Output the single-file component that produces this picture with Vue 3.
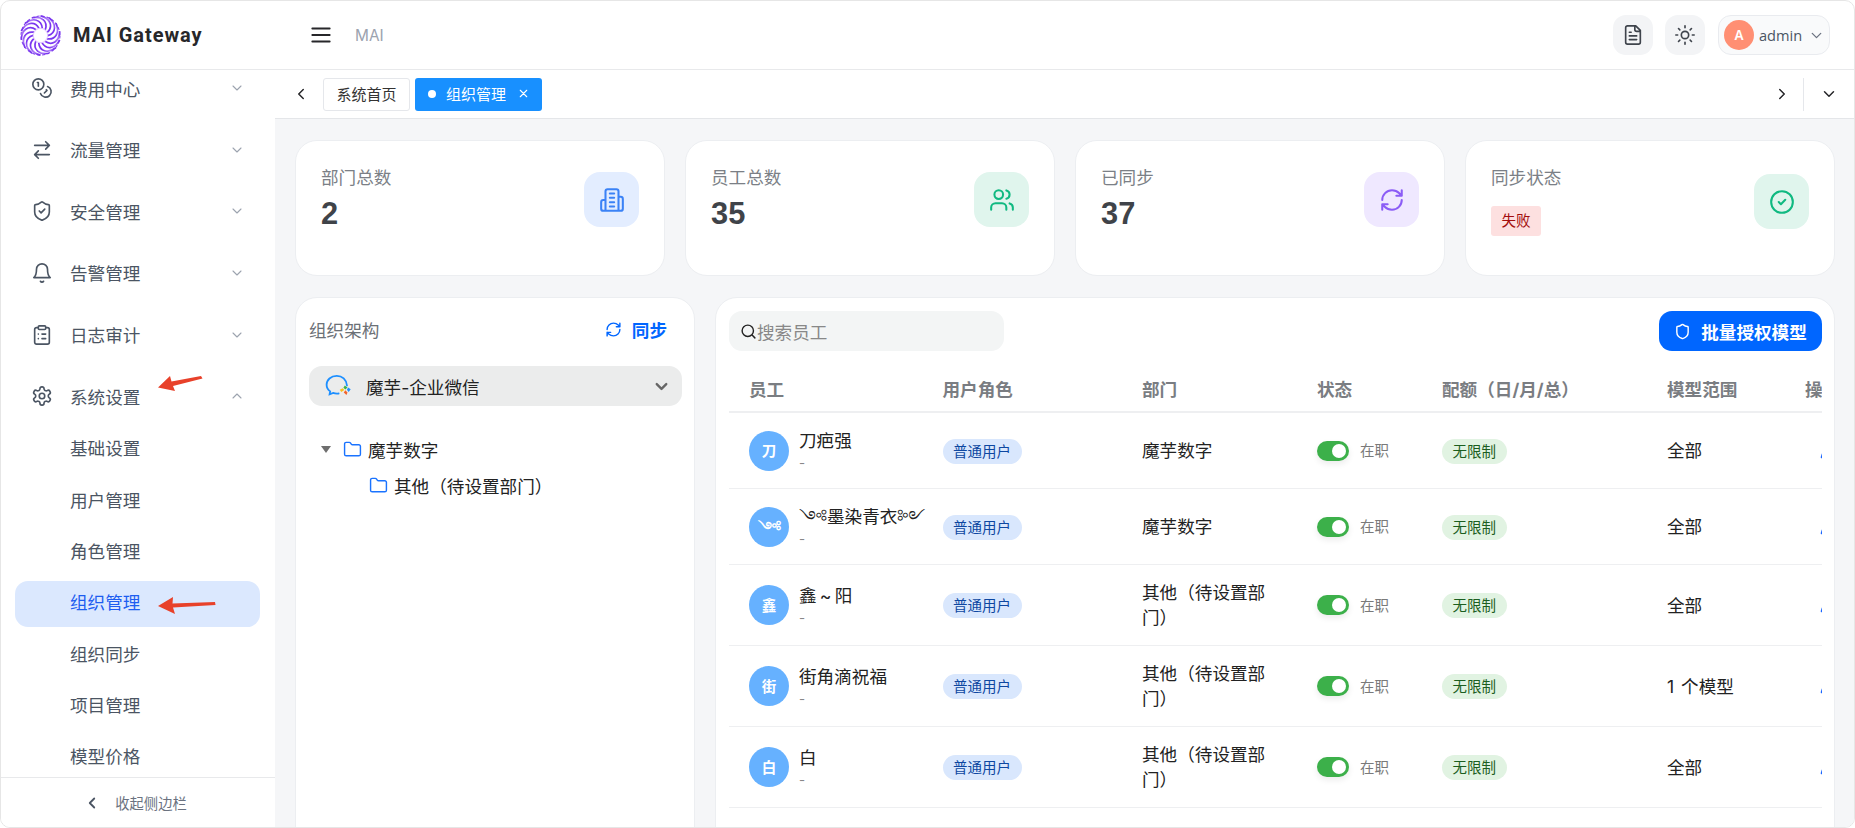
<template>
  <div class="app">
    <header class="topbar">
      <div class="brand">
        <svg class="logo" viewBox="0 0 40 40">
          <defs>
            <radialGradient id="swirl" cx="50%" cy="50%" r="50%">
              <stop offset="30%" stop-color="#e3c4ff" />
              <stop offset="100%" stop-color="#7a35f0" />
            </radialGradient>
          </defs>
          <circle cx="20" cy="20" r="19.5" fill="#fff" />
          <path
            v-for="a in swirlAngles"
            :key="a"
            d="M20 0.8C29 3 33 11 26.500 17"
            fill="none"
            stroke="url(#swirl)"
            stroke-width="1.700"
            :transform="`rotate(${a} 20 20)`"
          />
          <circle cx="20" cy="20" r="19" fill="none" stroke="#7c3aed" stroke-width="1" stroke-dasharray="3 2" />
          <circle cx="20" cy="20" r="6.500" fill="#fff" />
          <circle cx="20" cy="20" r="7" fill="none" stroke="#e0c6ff" stroke-width="1" />
        </svg>
        <span class="brand-name">MAI Gateway</span>
      </div>
      <button class="menu-btn">
        <svg class="ic" viewBox="0 0 24 24"><path :d="icons.menu" /></svg>
      </button>
      <span class="crumb">MAI</span>
      <div class="top-actions">
        <button class="round-btn"><svg class="ic" viewBox="0 0 24 24"><path :d="icons.file" /></svg></button>
        <button class="round-btn"><svg class="ic" viewBox="0 0 24 24"><path :d="icons.sun" /></svg></button>
        <div class="user-pill">
          <span class="user-avatar">A</span>
          <span class="user-name">admin</span>
          <svg class="ic pill-chev" viewBox="0 0 24 24"><path :d="icons.down" /></svg>
        </div>
      </div>
    </header>

    <div class="body">
      <aside class="sidebar">
        <nav class="nav">
          <div class="nav-list">
            <div v-for="item in navItems" :key="item.label" class="nav-item">
              <svg class="ic nav-icon" viewBox="0 0 24 24"><path :d="icons[item.icon]" /></svg>
              <span class="nav-label">{{ item.label }}</span>
              <svg class="ic nav-chev" viewBox="0 0 24 24"><path :d="item.open ? icons.up : icons.down" /></svg>
            </div>
            <div class="sub-list">
              <div
                v-for="sub in subItems"
                :key="sub"
                class="sub-item"
                :class="{ active: sub === '组织管理' }"
              >{{ sub }}</div>
            </div>
          </div>
        </nav>
        <div class="side-foot">
          <svg class="ic foot-chev" viewBox="0 0 24 24"><path :d="icons.left" /></svg>
          <span>收起侧边栏</span>
        </div>
      </aside>

      <div class="content">
        <div class="tabbar">
          <svg class="ic tab-nav" viewBox="0 0 24 24"><path :d="icons.left" /></svg>
          <div class="tab">系统首页</div>
          <div class="tab current">
            <i class="tab-dot"></i>
            <span>组织管理</span>
            <svg class="ic tab-close" viewBox="0 0 24 24"><path :d="icons.close" /></svg>
          </div>
          <div class="tab-end">
            <svg class="ic tab-nav" viewBox="0 0 24 24"><path :d="icons.right" /></svg>
            <span class="tab-sep"></span>
            <svg class="ic tab-nav" viewBox="0 0 24 24"><path :d="icons.down" /></svg>
          </div>
        </div>

        <main class="main">
          <section class="stats">
            <div v-for="s in stats" :key="s.label" class="stat-card">
              <div class="stat-text">
                <div class="stat-label">{{ s.label }}</div>
                <div v-if="s.value" class="stat-value">{{ s.value }}</div>
                <div v-else class="stat-badge">{{ s.badge }}</div>
              </div>
              <div class="stat-icon" :class="s.tone">
                <svg class="ic" viewBox="0 0 24 24"><path :d="icons[s.icon]" /></svg>
              </div>
            </div>
          </section>

          <section class="panels">
            <div class="panel org-panel">
              <div class="org-head">
                <span class="org-title">组织架构</span>
                <span class="sync-btn">
                  <svg class="ic" viewBox="0 0 24 24"><path :d="icons.refresh" /></svg>
                  同步
                </span>
              </div>
              <div class="org-select">
                <svg class="wecom" viewBox="0 0 28 24">
                  <path d="M20.500 11.500C20 6 16 2.500 11 2.500 5.500 2.500 1.500 6.300 1.500 10.800c0 2.700 1.300 4.700 3.300 6.200l-.5 2.800 3.300-1.300c1.100.4 2.300.6 3.600.6.500 0 1-.1 1.500-.1" fill="none" stroke="#1d8fff" stroke-width="1.700" stroke-linecap="round" />
                  <path d="M18.500 11.500l2.500 2-2 1.700-1.800-1.600z" fill="#3cb34a" />
                  <path d="M21.500 13.500l2.500 1.500-2 2.500-1.500-2z" fill="#1d8fff" />
                  <path d="M19 16l2 2-1 2.500-2.500-2.500z" fill="#f2642b" />
                  <path d="M13.800 15.500l2.700-1.300 1.500 1.500-2.800 1.800z" fill="#f7c21d" />
                </svg>
                <span class="org-name">魔芋-企业微信</span>
                <svg class="ic select-chev" viewBox="0 0 24 24"><path :d="icons.down" /></svg>
              </div>
              <div class="tree">
                <div class="tree-row">
                  <i class="tree-caret"></i>
                  <svg class="ic tree-folder" viewBox="0 0 24 24"><path :d="icons.folder" /></svg>
                  <span>魔芋数字</span>
                </div>
                <div class="tree-row child">
                  <svg class="ic tree-folder" viewBox="0 0 24 24"><path :d="icons.folder" /></svg>
                  <span>其他（待设置部门）</span>
                </div>
              </div>
            </div>

            <div class="panel staff-panel">
              <div class="staff-tools">
                <div class="search">
                  <svg class="ic" viewBox="0 0 24 24"><path :d="icons.search" /></svg>
                  <span>搜索员工</span>
                </div>
                <button class="primary-btn">
                  <svg class="ic" viewBox="0 0 24 24"><path :d="icons.shield" /></svg>
                  批量授权模型
                </button>
              </div>
              <div class="table-wrap">
                <table class="staff-table">
                  <colgroup>
                    <col v-for="w in colWidths" :key="w" :style="{ width: w + 'px' }" />
                  </colgroup>
                  <thead>
                    <tr>
                      <th v-for="h in headers" :key="h">{{ h }}</th>
                    </tr>
                  </thead>
                  <tbody>
                    <tr v-for="row in rows" :key="row.name">
                      <td>
                        <div class="person">
                          <span class="avatar">{{ row.initial }}</span>
                          <div>
                            <div class="person-name">{{ row.name }}</div>
                            <div class="person-sub">-</div>
                          </div>
                        </div>
                      </td>
                      <td><span class="pill role">普通用户</span></td>
                      <td class="dept">{{ row.dept }}</td>
                      <td>
                        <div class="status">
                          <span class="switch"><i></i></span>
                          <span class="status-text">在职</span>
                        </div>
                      </td>
                      <td><span class="pill quota">无限制</span></td>
                      <td class="scope">{{ row.scope }}</td>
                      <td class="ops">
                        <svg class="ic" viewBox="0 0 24 24"><path :d="icons.pencil" /></svg>
                      </td>
                    </tr>
                  </tbody>
                </table>
              </div>
            </div>
          </section>
        </main>
      </div>
    </div>

    <svg class="marks" viewBox="0 0 275 828">
      <path d="M158 387.500 170 376 171.500 381.500 201 376 202.500 378.500 173 386 175 391z" fill="#e8412a" />
      <path d="M158 606 173 597 172.500 603.500 215 602 215.500 605 173 607.500 175 614z" fill="#e8412a" />
    </svg>
  </div>
</template>

<script setup>
const swirlAngles = Array.from({ length: 14 }, (_, i) => (i * 360) / 14)

const ring = (cx, cy, r) => `M${cx - r} ${cy}a${r} ${r} 0 1 0 ${2 * r} 0a${r} ${r} 0 1 0 ${-2 * r} 0`

const icons = {
  menu: 'M4 6h16M4 12h16M4 18h16',
  left: 'm15 18-6-6 6-6',
  right: 'm9 18 6-6-6-6',
  down: 'm6 9 6 6 6-6',
  up: 'm18 15-6-6-6 6',
  close: 'M18 6 6 18M6 6l12 12',
  file: 'M15 2H6a2 2 0 0 0-2 2v16a2 2 0 0 0 2 2h12a2 2 0 0 0 2-2V7ZM14 2v4a2 2 0 0 0 2 2h4M10 9H8M16 13H8M16 17H8',
  sun: ring(12, 12, 4) + 'M12 2v2M12 20v2M4.930 4.930l1.410 1.410M17.660 17.660l1.410 1.410M2 12h2M20 12h2M6.340 17.660l-1.410 1.410M19.070 4.930l-1.410 1.410',
  coins: ring(8, 8, 6) + 'M18.090 10.370A6 6 0 1 1 10.340 18M7 6h1v4M16.710 13.880l.7.710-2.820 2.820',
  swap: 'm16 3 4 4-4 4M20 7H4M8 21l-4-4 4-4M4 17h16',
  shieldCheck: 'M20 13c0 5-3.500 7.500-7.660 8.950a1 1 0 0 1-.670-.010C7.500 20.500 4 18 4 13V6a1 1 0 0 1 1-1c2 0 4.500-1.200 6.240-2.720a1.170 1.170 0 0 1 1.520 0C14.510 3.810 17 5 19 5a1 1 0 0 1 1 1zM9 12l2 2 4-4',
  shield: 'M20 13c0 5-3.500 7.500-7.660 8.950a1 1 0 0 1-.670-.010C7.500 20.500 4 18 4 13V6a1 1 0 0 1 1-1c2 0 4.500-1.200 6.240-2.720a1.170 1.170 0 0 1 1.520 0C14.510 3.810 17 5 19 5a1 1 0 0 1 1 1z',
  bell: 'M6 8a6 6 0 0 1 12 0c0 7 3 9 3 9H3s3-2 3-9M10.300 21a1.940 1.940 0 0 0 3.400 0',
  clipboard: 'M9 2h6a1 1 0 0 1 1 1v2a1 1 0 0 1-1 1H9a1 1 0 0 1-1-1V3a1 1 0 0 1 1-1zM16 4h2a2 2 0 0 1 2 2v14a2 2 0 0 1-2 2H6a2 2 0 0 1-2-2V6a2 2 0 0 1 2-2h2M12 11h4M12 16h4M8 11h.010M8 16h.010',
  gear: 'M12.220 2h-.440a2 2 0 0 0-2 2v.180a2 2 0 0 1-1 1.730l-.430.250a2 2 0 0 1-2 0l-.150-.080a2 2 0 0 0-2.730.730l-.220.380a2 2 0 0 0 .730 2.730l.150.100a2 2 0 0 1 1 1.720v.510a2 2 0 0 1-1 1.740l-.150.090a2 2 0 0 0-.730 2.730l.220.380a2 2 0 0 0 2.730.730l.150-.080a2 2 0 0 1 2 0l.430.250a2 2 0 0 1 1 1.730V20a2 2 0 0 0 2 2h.440a2 2 0 0 0 2-2v-.180a2 2 0 0 1 1-1.730l.430-.250a2 2 0 0 1 2 0l.150.080a2 2 0 0 0 2.730-.730l.220-.390a2 2 0 0 0-.730-2.730l-.150-.080a2 2 0 0 1-1-1.740v-.500a2 2 0 0 1 1-1.740l.150-.090a2 2 0 0 0 .730-2.730l-.220-.380a2 2 0 0 0-2.730-.730l-.150.080a2 2 0 0 1-2 0l-.430-.250a2 2 0 0 1-1-1.730V4a2 2 0 0 0-2-2z' + ring(12, 12, 3),
  building: 'M6 22V4a2 2 0 0 1 2-2h8a2 2 0 0 1 2 2v18ZM6 12H4a2 2 0 0 0-2 2v6a2 2 0 0 0 2 2h2M18 9h2a2 2 0 0 1 2 2v9a2 2 0 0 1-2 2h-2M10 6h4M10 10h4M10 14h4M10 18h4',
  users: 'M16 21v-2a4 4 0 0 0-4-4H6a4 4 0 0 0-4 4v2' + ring(9, 7, 4) + 'M22 21v-2a4 4 0 0 0-3-3.870M16 3.130a4 4 0 0 1 0 7.750',
  refresh: 'M3 12a9 9 0 0 1 9-9 9.750 9.750 0 0 1 6.740 2.740L21 8M21 3v5h-5M21 12a9 9 0 0 1-9 9 9.750 9.750 0 0 1-6.740-2.740L3 16M8 16H3v5',
  check: ring(12, 12, 10) + 'M9 12l2 2 4-4',
  folder: 'M20 20a2 2 0 0 0 2-2V8a2 2 0 0 0-2-2h-7.900a2 2 0 0 1-1.690-.900L9.600 3.900A2 2 0 0 0 7.930 3H4a2 2 0 0 0-2 2v13a2 2 0 0 0 2 2Z',
  search: ring(11, 11, 8) + 'M21 21l-4.300-4.300',
  pencil: 'M21.170 6.810a1 1 0 0 0-3.990-3.990L3.840 16.170a2 2 0 0 0-.5.830l-1.320 4.350a.5.5 0 0 0 .620.620l4.350-1.320a2 2 0 0 0 .830-.500z'
}

const navItems = [
  { label: '费用中心', icon: 'coins' },
  { label: '流量管理', icon: 'swap' },
  { label: '安全管理', icon: 'shieldCheck' },
  { label: '告警管理', icon: 'bell' },
  { label: '日志审计', icon: 'clipboard' },
  { label: '系统设置', icon: 'gear', open: true }
]

const subItems = ['基础设置', '用户管理', '角色管理', '组织管理', '组织同步', '项目管理', '模型价格']

const stats = [
  { label: '部门总数', value: '2', icon: 'building', tone: 'blue' },
  { label: '员工总数', value: '35', icon: 'users', tone: 'green' },
  { label: '已同步', value: '37', icon: 'refresh', tone: 'purple' },
  { label: '同步状态', badge: '失败', icon: 'check', tone: 'green' }
]

const headers = ['员工', '用户角色', '部门', '状态', '配额（日/月/总）', '模型范围', '操作']
const colWidths = [193.5, 199.5, 175, 125, 225, 138, 120]

const other = '其他（待设置部门）'
const rows = [
  { initial: '刀', name: '刀疤强', dept: '魔芋数字', scope: '全部' },
  { initial: '༺', name: '༺墨染青衣༻', dept: '魔芋数字', scope: '全部' },
  { initial: '鑫', name: '鑫\u2009~\u2009阳', dept: other, scope: '全部' },
  { initial: '街', name: '街角滴祝福', dept: other, scope: '1 个模型' },
  { initial: '白', name: '白', dept: other, scope: '全部' },
  { initial: '', name: '', dept: other, scope: '全部' }
]
</script>

<style>
html, body { margin: 0; background: #fff; }
</style>

<style scoped>
.app {
  position: relative;
  box-sizing: border-box;
  width: 1855px;
  height: 828px;
  display: flex;
  flex-direction: column;
  overflow: hidden;
  border: 1px solid #e6e6e6;
  border-radius: 10px;
  background: #fff;
  font-family: Inter, "Noto Sans CJK SC", "Liberation Sans", sans-serif;
  font-size: 17.6px;
  color: #222;
}

.ic {
  width: 20px;
  height: 20px;
  fill: none;
  stroke: currentColor;
  stroke-width: 2;
  stroke-linecap: round;
  stroke-linejoin: round;
  flex: none;
}

button {
  border: none;
  padding: 0;
  font: inherit;
  background: none;
}

.topbar {
  flex: none;
  box-sizing: border-box;
  height: 69px;
  display: flex;
  align-items: center;
  border-bottom: 1px solid #e8e9eb;
}

.brand {
  width: 302px;
  flex: none;
  display: flex;
  align-items: center;
  padding-left: 19px;
  box-sizing: border-box;
  gap: 12px;
}

.logo {
  width: 41px;
  height: 41px;
}

.brand-name {
  font-family: Roboto, Inter, sans-serif;
  font-size: 20px;
  font-weight: 700;
  letter-spacing: 0.95px;
  color: #27272a;
}

.menu-btn {
  width: 26px;
  height: 26px;
  display: flex;
  align-items: center;
  justify-content: center;
  margin-left: 5px;
  color: #27272a;
}

.menu-btn .ic {
  width: 26px;
  height: 26px;
  stroke-width: 1.8;
}

.crumb {
  margin-left: 21px;
  font-size: 15.4px;
  color: #9ca3af;
}

.top-actions {
  margin-left: auto;
  margin-right: 24px;
  display: flex;
  align-items: center;
  gap: 12px;
}

.round-btn {
  width: 40px;
  height: 40px;
  border-radius: 13px;
  background: #f3f4f6;
  display: flex;
  align-items: center;
  justify-content: center;
  color: #3f444c;
}

.round-btn .ic {
  width: 22px;
  height: 22px;
  stroke-width: 1.8;
}

.user-pill {
  box-sizing: border-box;
  height: 40px;
  width: 112px;
  margin-left: 1px;
  padding-left: 5px;
  display: flex;
  align-items: center;
  border: 1px solid #e9ebef;
  border-radius: 13px;
  background: #f9fafb;
}

.user-avatar {
  width: 30px;
  height: 30px;
  border-radius: 50%;
  background: #ff8f73;
  color: #fff;
  font-size: 13.2px;
  font-weight: 600;
  display: flex;
  align-items: center;
  justify-content: center;
}

.user-name {
  margin-left: 5px;
  font-family: "Open Sans", sans-serif;
  font-size: 14.6px;
  color: #4b5563;
}

.pill-chev {
  width: 17px;
  height: 17px;
  margin-left: 6px;
  color: #6b7280;
  stroke-width: 1.8;
}

.body {
  flex: 1;
  min-height: 0;
  display: flex;
}

.sidebar {
  width: 274px;
  flex: none;
  display: flex;
  flex-direction: column;
  background: #fff;
}

.nav {
  flex: 1;
  min-height: 0;
  overflow: hidden;
}

.nav-list {
  margin-top: -12.6px;
}

.nav-item {
  height: 61.6px;
  display: flex;
  align-items: center;
  padding-left: 31px;
  color: #4b5563;
}

.nav-icon {
  width: 22px;
  height: 22px;
  margin-left: -1px;
  stroke-width: 1.8;
}

.nav-label {
  margin-left: 17px;
  flex: 1;
}

.nav-chev {
  width: 16px;
  height: 16px;
  margin-right: 30px;
  color: #9ca3af;
  stroke-width: 1.6;
}

.sub-list {
  display: flex;
  flex-direction: column;
  gap: 5.3px;
  margin: 0.5px 15px 0 14px;
}

.sub-item {
  height: 46px;
  line-height: 44.5px;
  padding-left: 55px;
  border-radius: 13px;
  color: #4b5563;
}

.sub-item.active {
  background: #dbe8fe;
  color: #1d5df0;
}

.side-foot {
  flex: none;
  box-sizing: border-box;
  height: 50px;
  border-top: 1px solid #e8e9eb;
  display: flex;
  align-items: center;
  justify-content: center;
  gap: 14px;
  padding-right: 6px;
  font-size: 14.3px;
  color: #6b7280;
}

.foot-chev {
  width: 18px;
  height: 18px;
  color: #4b5563;
  stroke-width: 2.4;
}

.content {
  flex: 1;
  min-width: 0;
  display: flex;
  flex-direction: column;
}

.tabbar {
  flex: none;
  box-sizing: border-box;
  height: 49px;
  display: flex;
  align-items: center;
  border-bottom: 1px solid #e4e6e9;
  background: #fff;
  padding-left: 17px;
}

.tab-nav {
  width: 18px;
  height: 18px;
  color: #27272a;
  stroke-width: 2;
}

.tab {
  box-sizing: border-box;
  height: 33px;
  margin-left: 5px;
  padding: 0 12.5px 1px;
  display: flex;
  align-items: center;
  border: 1px solid #e5e7eb;
  border-radius: 3px;
  font-size: 15px;
  color: #333;
}

.tabbar > .tab-nav + .tab {
  margin-left: 13px;
}

.tab.current {
  width: 127px;
  padding: 0 0 1px 13px;
  border: none;
  background: #1890ff;
  color: #fff;
}

.tab-dot {
  width: 8px;
  height: 8px;
  border-radius: 50%;
  background: #fff;
  margin-right: 10px;
}

.tab-close {
  width: 13px;
  height: 13px;
  margin-left: 11px;
}

.tab-end {
  margin-left: auto;
  display: flex;
  align-items: center;
  padding-right: 16px;
}

.tab-sep {
  width: 1px;
  height: 33px;
  background: #e5e7eb;
  margin: 0 16px 0 12px;
}

.main {
  flex: 1;
  min-height: 0;
  overflow: hidden;
  background: #f5f6f8;
  padding: 21px 19px 0 20px;
}

.stats {
  display: grid;
  grid-template-columns: repeat(4, 1fr);
  gap: 20px;
}

.stat-card {
  box-sizing: border-box;
  height: 136px;
  padding: 22px 25px 0 25px;
  display: flex;
  align-items: flex-start;
  justify-content: space-between;
  background: #fff;
  border: 1px solid #eceef1;
  border-radius: 22px;
}

.stat-label {
  line-height: 30px;
  color: #7b7f86;
}

.stat-value {
  margin-top: 1.5px;
  line-height: 37px;
  font-family: "Liberation Sans", sans-serif;
  font-size: 30.8px;
  font-weight: 700;
  color: #3f4349;
}

.stat-badge {
  margin-top: 13px;
  width: 50px;
  height: 30px;
  line-height: 30px;
  text-align: center;
  border-radius: 3px;
  background: #fde0e0;
  color: #a30e0e;
  font-size: 14.5px;
}

.stat-icon {
  width: 55px;
  height: 55px;
  margin-top: 9px;
  border-radius: 16px;
  display: flex;
  align-items: center;
  justify-content: center;
}

.stat-card:last-child .stat-icon {
  margin-top: 11px;
}

.stat-icon .ic {
  width: 26px;
  height: 26px;
  stroke-width: 1.9;
}

.stat-icon.blue { background: #e3edff; color: #3b82f6; }
.stat-icon.green { background: #e0f5ed; color: #10b981; }
.stat-icon.purple { background: #efe8ff; color: #8b5cf6; }

.panels {
  margin-top: 21px;
  display: grid;
  grid-template-columns: 400px 1120px;
  gap: 20px;
}

.panel {
  box-sizing: border-box;
  height: 700px;
  background: #fff;
  border: 1px solid #eceef1;
  border-radius: 22px;
  padding: 13px 12px 13px 13px;
}

.org-head {
  height: 36px;
  display: flex;
  align-items: center;
  justify-content: space-between;
  padding-right: 15px;
}

.org-title {
  color: #6b7076;
}

.sync-btn {
  display: flex;
  align-items: center;
  gap: 10px;
  font-weight: 700;
  color: #0066ff;
}

.sync-btn .ic {
  width: 17px;
  height: 17px;
}

.org-select {
  box-sizing: border-box;
  height: 40px;
  margin-top: 19px;
  width: 373px;
  border-radius: 13px;
  background: #ebecec;
  display: flex;
  align-items: center;
  padding-left: 16px;
}

.wecom {
  width: 30px;
  height: 26px;
  flex: none;
}

.org-name {
  margin-left: 11px;
  flex: 1;
  color: #222;
}

.select-chev {
  width: 19px;
  height: 19px;
  margin-right: 11px;
  color: #666;
  stroke-width: 3;
}

.tree {
  margin-top: 25px;
}

.tree-row {
  height: 36px;
  display: flex;
  align-items: center;
  padding-left: 12px;
  color: #222;
}

.tree-row.child {
  padding-left: 60px;
}

.tree-caret {
  width: 0;
  height: 0;
  border-left: 5.5px solid transparent;
  border-right: 5.5px solid transparent;
  border-top: 7px solid #6e6e6e;
  margin-right: 12px;
}

.tree-folder {
  width: 19px;
  height: 19px;
  margin-right: 6px;
  color: #1a73ff;
  stroke-width: 1.8;
}

.staff-tools {
  display: flex;
  align-items: center;
  justify-content: space-between;
}

.search {
  box-sizing: border-box;
  width: 275px;
  height: 40px;
  border-radius: 13px;
  background: #f3f5f5;
  padding-left: 11px;
  display: flex;
  align-items: center;
  color: #888;
}

.search .ic {
  width: 17px;
  height: 17px;
  color: #222;
  stroke-width: 2;
}

.primary-btn {
  width: 163px;
  height: 40px;
  border-radius: 13px;
  background: #0066ff;
  color: #fff;
  font-weight: 700;
  display: flex;
  align-items: center;
  justify-content: center;
  gap: 10px;
}

.primary-btn .ic {
  width: 17px;
  height: 17px;
  stroke-width: 2;
}

.table-wrap {
  margin-top: 14px;
  width: 1093px;
  overflow: hidden;
}

.staff-table {
  table-layout: fixed;
  width: 1176px;
  border-collapse: collapse;
}

th {
  height: 46px;
  padding: 0 0 0 20px;
  text-align: left;
  font-weight: 700;
  color: #7a7d82;
  border-bottom: 2px solid #eeeff1;
  white-space: nowrap;
  overflow: hidden;
}

td {
  padding: 15px 20px;
  border-bottom: 1px solid #eeeff1;
  color: #222;
  line-height: 25px;
}

.person {
  display: flex;
  align-items: center;
  gap: 10px;
}

.avatar {
  width: 40px;
  height: 40px;
  flex: none;
  border-radius: 50%;
  background: #66b1ff;
  color: #fff;
  font-size: 14.5px;
  font-weight: 700;
  display: flex;
  align-items: center;
  justify-content: center;
}

.person-name {
  line-height: 25px;
  white-space: nowrap;
  color: #222;
}

.person-sub {
  line-height: 20px;
  font-size: 13.2px;
  color: #888;
}

.pill {
  display: inline-block;
  height: 25px;
  line-height: 25px;
  border-radius: 13px;
  font-size: 14.5px;
  padding: 0 10.500px;
  vertical-align: middle;
}

.role {
  background: #d9e7fd;
  color: #0d47a1;
}

.quota {
  background: #e1f3e2;
  color: #1b5e20;
}

.status {
  display: flex;
  align-items: center;
  gap: 11px;
}

.switch {
  box-sizing: border-box;
  width: 32px;
  height: 20px;
  padding: 3px;
  display: flex;
  justify-content: flex-end;
  border-radius: 10px;
  background: #3cb04a;
  box-shadow: 0 3px 6px rgba(0, 0, 0, 0.08);
}

.switch i {
  width: 14px;
  height: 14px;
  border-radius: 50%;
  background: #fff;
}

.status-text {
  font-size: 14.5px;
  color: #7a7a7a;
}

.scope {
  word-spacing: 2px;
}

.ops {
  padding-left: 35px;
  color: #1a66ff;
}

.ops .ic {
  width: 16px;
  height: 16px;
  display: block;
}

.marks {
  position: absolute;
  left: -1px;
  top: -1px;
  width: 275px;
  height: 828px;
  pointer-events: none;
}
</style>
